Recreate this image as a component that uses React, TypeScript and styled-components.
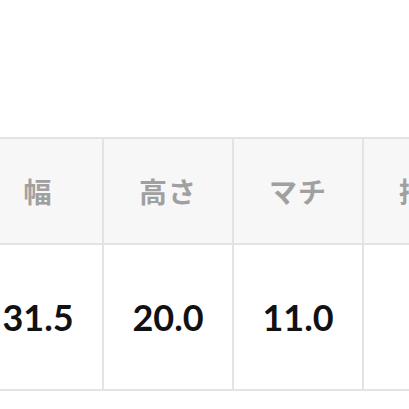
import React, { useEffect, useRef } from "react";
import styled, { createGlobalStyle } from "styled-components";

const GlobalStyle = createGlobalStyle`
  html, body {
    margin: 0;
    padding: 0;
    background: #ffffff;
  }
  body {
    font-family: Lato, "Noto Sans CJK JP", sans-serif;
  }
`;

const sizes = [
  { label: "幅", value: "31.5" },
  { label: "高さ", value: "20.0" },
  { label: "マチ", value: "11.0" },
  { label: "持手", value: "16" },
  { label: "重さ", value: "0.5" },
];

const Page = styled.div`
  width: 409px;
  height: 409px;
  padding-top: 137px;
  box-sizing: border-box;
  overflow: hidden;
`;

const Scroller = styled.div`
  width: 100%;
  overflow-x: auto;
  scrollbar-width: none;
  &::-webkit-scrollbar {
    display: none;
  }
`;

const Table = styled.table`
  border-collapse: collapse;
  table-layout: fixed;
`;

const Cell = styled.td<{ $head?: boolean }>`
  width: 130px;
  min-width: 130px;
  box-sizing: border-box;
  border: 2px solid #e3e3e3;
  text-align: center;
  vertical-align: middle;
  padding: 0;
  height: ${(p) => (p.$head ? "106px" : "146px")};
  background: ${(p) => (p.$head ? "#f7f7f7" : "#ffffff")};
  color: ${(p) => (p.$head ? "#a0a0a0" : "#111111")};
  font-family: ${(p) =>
    p.$head
      ? '"Noto Sans CJK JP", sans-serif'
      : 'Lato, "Noto Sans CJK JP", sans-serif'};
  font-size: ${(p) => (p.$head ? "28px" : "36px")};
  font-weight: 700;
  letter-spacing: ${(p) => (p.$head ? "1px" : "0")};
`;

const App = () => {
  const ref = useRef<HTMLDivElement>(null);

  useEffect(() => {
    if (ref.current) ref.current.scrollLeft = 28;
  }, []);

  return (
    <Page>
      <GlobalStyle />
      <Scroller ref={ref}>
        <Table>
          <tbody>
            <tr>
              {sizes.map((s) => (
                <Cell as="th" $head key={s.label}>
                  {s.label}
                </Cell>
              ))}
            </tr>
            <tr>
              {sizes.map((s) => (
                <Cell key={s.label}>{s.value}</Cell>
              ))}
            </tr>
          </tbody>
        </Table>
      </Scroller>
    </Page>
  );
};

export default App;
